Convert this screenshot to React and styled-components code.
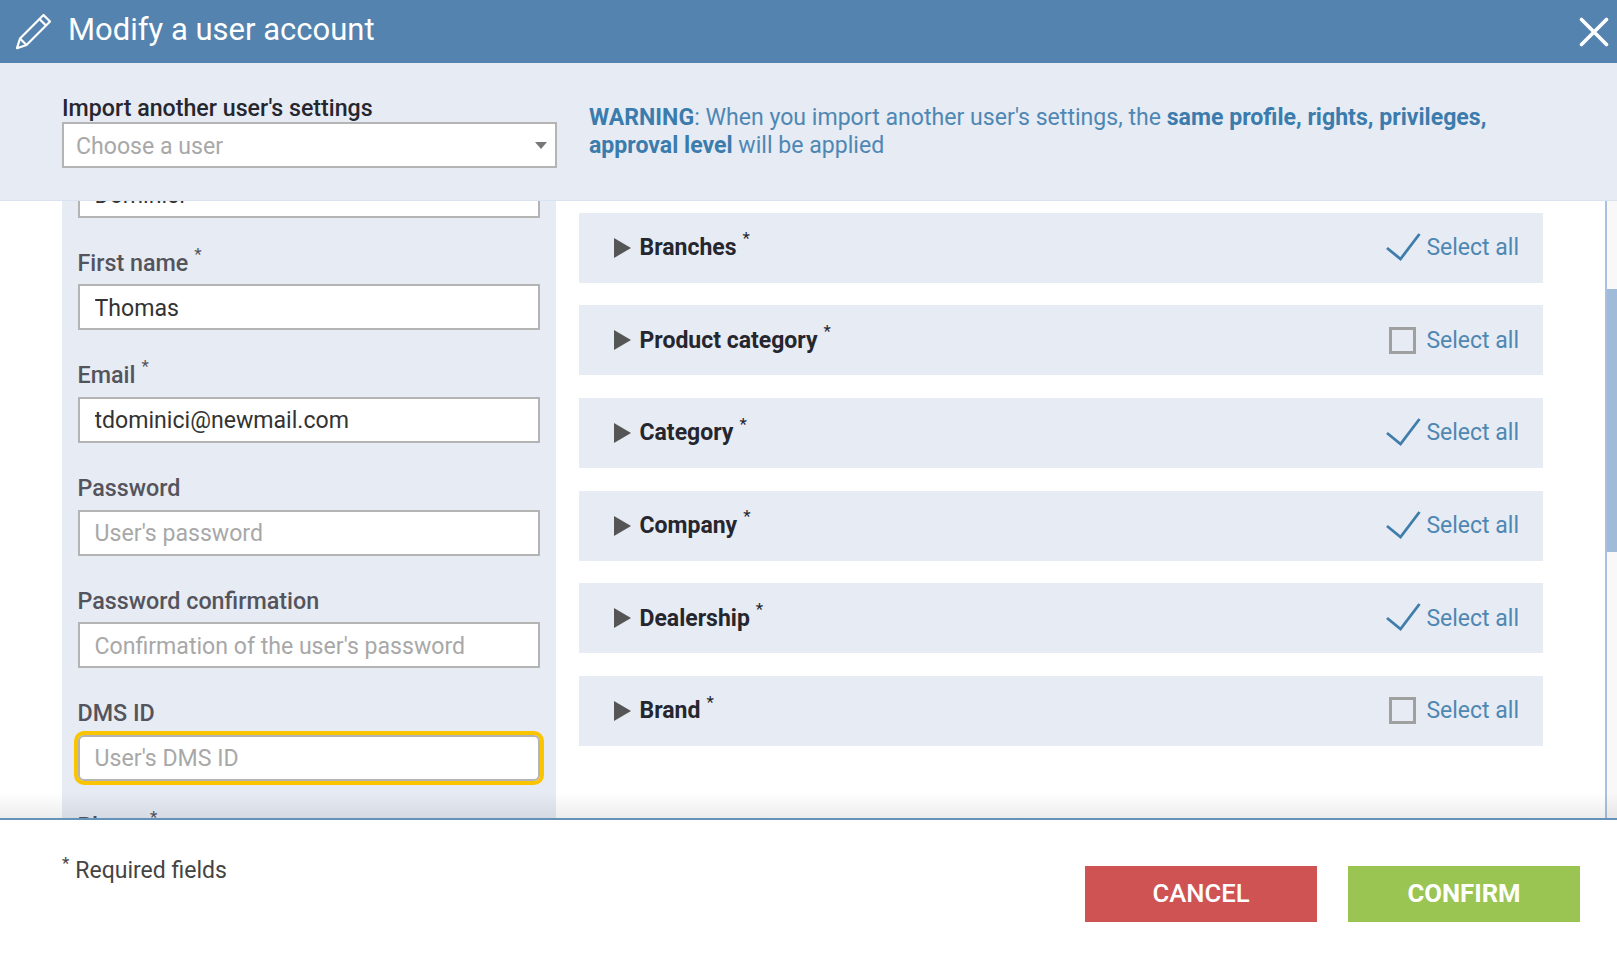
import React from "react";
import styled, { createGlobalStyle } from "styled-components";

const Global = createGlobalStyle`
  html, body { margin: 0; padding: 0; background: #fff; }
  * { box-sizing: border-box; }
  body { font-family: Roboto, "Liberation Sans", sans-serif; overflow: hidden; }
`;

const Page = styled.div`
  width: 1617px;
  height: 965px;
  display: flex;
  flex-direction: column;
  overflow: hidden;
`;

const Header = styled.header`
  flex: 0 0 63px;
  display: flex;
  align-items: center;
  background: #5383ae;
  color: #fff;
  padding: 0 8px 0 15px;
`;

const Title = styled.h1`
  flex: 1;
  margin: 0 0 4px 16px;
  font-size: 31px;
  font-weight: 400;
  line-height: 56px;
`;

const Close = styled.button`
  display: flex;
  padding: 0;
  background: none;
  border: 0;
`;

const ImportPanel = styled.section`
  flex: 0 0 138px;
  display: flex;
  background: #e6ebf4;
  border-bottom: 1px solid #d9e2ef;
  padding: 31px 0 0 62px;
  position: relative;
  z-index: 2;
`;

const ImportField = styled.div`
  width: 495px;
`;

const ImportLabel = styled.div`
  font-size: 23.2px;
  font-weight: 500;
  line-height: 29px;
  color: #26262e;
`;

const Select = styled.div`
  height: 46px;
  margin-top: -1px;
  display: flex;
  align-items: center;
  justify-content: space-between;
  background: #fff;
  border: 2px solid #b4b4b4;
  padding: 2px 8px 0 12px;
  font-size: 23.1px;
  color: #a8a8a8;
`;

const Caret = styled.span`
  width: 0;
  height: 0;
  margin-top: -2px;
  border-left: 6px solid transparent;
  border-right: 6px solid transparent;
  border-top: 7px solid #777;
`;

const Warning = styled.p`
  width: 930px;
  margin: 10px 0 0 32px;
  font-size: 23.1px;
  line-height: 28px;
  color: #4f87b3;
  b { font-weight: 700; color: #3c7cac; }
`;

const Body = styled.div`
  flex: 1;
  min-height: 0;
  display: flex;
  position: relative;
  overflow: hidden;
  padding-left: 62px;
`;

const FormColumn = styled.div`
  flex: 0 0 494px;
  margin-top: -29.4px;
  padding: 0 16px 0 15.5px;
  background: #e6ebf4;
`;

const Field = styled.div`
  padding-top: ${(p) => (p.$first ? 0 : 29.8)}px;
`;

const Label = styled.label`
  display: block;
  height: 36.66px;
  font-size: 23.3px;
  font-weight: 500;
  line-height: 30px;
  color: #54545c;
`;

const Star = styled.sup`
  font-size: 17px;
  font-weight: 400;
  line-height: 0;
  margin-left: 6px;
  position: relative;
  top: -2px;
  vertical-align: super;
`;

const Input = styled.input`
  display: block;
  width: 100%;
  height: 46.2px;
  background: #fff;
  border: 2px solid #b4b4b4;
  padding: 2px 15px 0;
  font-family: inherit;
  font-size: 23.1px;
  color: #333;
  outline: ${(p) => (p.$focus ? "4.5px solid #fbc400" : "none")};
  outline-offset: 0;
  border-radius: ${(p) => (p.$focus ? "6px" : "0")};
  &::placeholder { color: #a8a8a8; opacity: 1; }
`;

const RowsColumn = styled.div`
  flex: 0 0 964.5px;
  margin-left: 22.5px;
  padding-top: 11.5px;
  display: flex;
  flex-direction: column;
  gap: 22.7px;
`;

const Row = styled.div`
  height: 70px;
  display: flex;
  align-items: center;
  background: #e6ebf4;
  padding: 0 24px 0 35px;
`;

const Arrow = styled.span`
  width: 0;
  height: 0;
  border-top: 10px solid transparent;
  border-bottom: 10px solid transparent;
  border-left: 17px solid #555;
  margin-right: 9px;
`;

const RowName = styled.span`
  flex: 1;
  font-size: 23px;
  font-weight: 700;
  color: #26262e;
`;

const RowStar = styled(Star)`
  color: #26262e;
`;

const SelectToggle = styled.div`
  display: flex;
  align-items: center;
  justify-content: flex-end;
  font-size: 23px;
  color: #4f87b3;
`;

const IconSlot = styled.span`
  width: 40px;
  display: flex;
  align-items: center;
  justify-content: flex-start;
  padding-left: ${(p) => (p.$box ? 3 : 0)}px;
`;

const Box = styled.span`
  width: 27px;
  height: 27px;
  border: 3px solid #a0a0a0;
`;

const Scrollbar = styled.div`
  flex: 0 0 12px;
  margin-left: auto;
  background: #f8f8f8;
  border-left: 2px solid #a9c1dc;
`;

const Thumb = styled.div`
  height: 263px;
  margin-top: 88px;
  background: #a0bbd9;
`;

const Shade = styled.div`
  position: absolute;
  left: 0;
  right: 0;
  bottom: 0;
  height: 26px;
  background: linear-gradient(to bottom, rgba(0, 0, 0, 0), rgba(0, 0, 0, 0.07));
  pointer-events: none;
`;

const Footer = styled.footer`
  flex: 0 0 147px;
  display: flex;
  justify-content: space-between;
  background: #fff;
  border-top: 2px solid #6592b8;
  padding: 46px 37px 0 62px;
`;

const Note = styled.div`
  font-size: 23px;
  line-height: 50px;
  margin-top: -20px;
  color: #444;
  sup { font-size: 17px; line-height: 0; margin-right: 6px; }
`;

const Actions = styled.div`
  display: flex;
  gap: 31px;
  align-items: flex-start;
`;

const Button = styled.button`
  width: 232px;
  height: 56px;
  border: 0;
  background: ${(p) => p.$bg};
  color: #fff;
  font-family: inherit;
  font-size: 25.7px;
  font-weight: ${(p) => p.$weight};
  padding: 0 0 2px;
`;

const Pencil = () => (
  <svg width="37" height="37" viewBox="0 0 37 37" fill="none" stroke="#fff" strokeWidth="2.2" strokeLinejoin="round">
    <path d="M28.5 2 35 8.5 11.5 32 2 35.2 5 25.5Z" />
    <path d="M24.5 6 31 12.5" />
    <path d="M5 25.5 11.5 32" />
  </svg>
);

const CloseIcon = () => (
  <svg width="30" height="30" viewBox="0 0 30 30" fill="none" stroke="#fff" strokeWidth="3.6" strokeLinecap="round">
    <path d="M2.5 2.5 27.5 27.5M27.5 2.5 2.5 27.5" />
  </svg>
);

const CheckMark = styled.svg`
  margin-bottom: 2px;
`;

const Check = () => (
  <CheckMark width="35" height="28" viewBox="0 0 35 28" fill="none" stroke="#3f7dab" strokeWidth="2.8">
    <path d="M1 15 14.5 26 33.5 1" />
  </CheckMark>
);

const fields = [
  { label: "First name", star: true, value: "Thomas" },
  { label: "Email", star: true, value: "tdominici@newmail.com" },
  { label: "Password", placeholder: "User's password" },
  { label: "Password confirmation", placeholder: "Confirmation of the user's password" },
  { label: "DMS ID", placeholder: "User's DMS ID", focus: true },
  { label: "Phone", star: true, placeholder: "User's phone" },
];

const rows = [
  { name: "Branches", checked: true },
  { name: "Product category", checked: false },
  { name: "Category", checked: true },
  { name: "Company", checked: true },
  { name: "Dealership", checked: true },
  { name: "Brand", checked: false },
];

export default function App() {
  return (
    <Page>
      <Global />
      <Header>
        <Pencil />
        <Title>Modify a user account</Title>
        <Close aria-label="Close"><CloseIcon /></Close>
      </Header>
      <ImportPanel>
        <ImportField>
          <ImportLabel>Import another user's settings</ImportLabel>
          <Select>
            Choose a user
            <Caret />
          </Select>
        </ImportField>
        <Warning>
          <b>WARNING</b>: When you import another user's settings, the <b>same profile, rights, privileges, approval level</b> will be applied
        </Warning>
      </ImportPanel>
      <Body>
        <FormColumn>
          <Field $first>
            <Input readOnly value="Dominici" />
          </Field>
          {fields.map((f) => (
            <Field key={f.label}>
              <Label>
                {f.label}
                {f.star && <Star>*</Star>}
              </Label>
              <Input readOnly value={f.value} placeholder={f.placeholder} $focus={f.focus} />
            </Field>
          ))}
        </FormColumn>
        <RowsColumn>
          {rows.map((r) => (
            <Row key={r.name}>
              <Arrow />
              <RowName>
                {r.name}
                <RowStar>*</RowStar>
              </RowName>
              <SelectToggle>
                <IconSlot $box={!r.checked}>{r.checked ? <Check /> : <Box />}</IconSlot>
                Select all
              </SelectToggle>
            </Row>
          ))}
        </RowsColumn>
        <Scrollbar>
          <Thumb />
        </Scrollbar>
        <Shade />
      </Body>
      <Footer>
        <Note><sup>*</sup>Required fields</Note>
        <Actions>
          <Button $bg="#cf5353" $weight={500}>CANCEL</Button>
          <Button $bg="#9bc553" $weight={700}>CONFIRM</Button>
        </Actions>
      </Footer>
    </Page>
  );
}
